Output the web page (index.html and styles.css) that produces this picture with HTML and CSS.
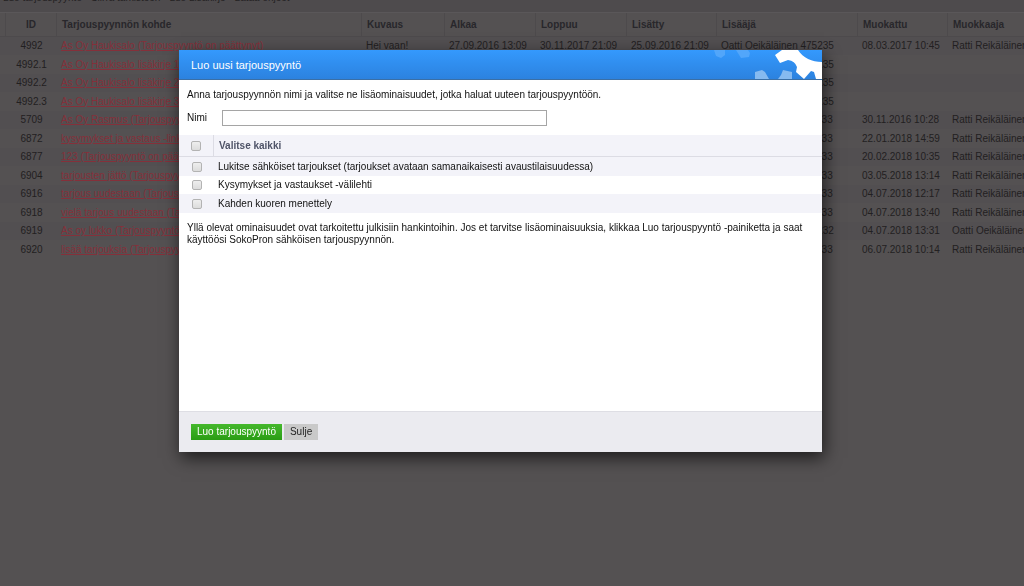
FILE: index.html
```html
<!DOCTYPE html>
<html lang="fi">
<head>
<meta charset="utf-8">
<meta name="viewport" content="width=device-width, initial-scale=1">
<title>Luo uusi tarjouspyyntö</title>
<link rel="stylesheet" href="styles.css">
</head>
<body>
<div class="page">
  <nav class="toolbar">
    <a href="#">Luo tarjouspyyntö</a><a href="#">Siirrä tarkisteen</a><a href="#">Luo Lisäkirje</a><a href="#">Lataa ohjeet</a>
  </nav>
  <table class="list">
    <colgroup><col class="c-edge"><col class="c-id"><col class="c-name"><col class="c-desc"><col class="c-date"><col class="c-date"><col class="c-added"><col class="c-person"><col class="c-mod"><col class="c-last"></colgroup>
    <thead>
      <tr><th></th><th class="id">ID</th><th>Tarjouspyynnön kohde</th><th>Kuvaus</th><th>Alkaa</th><th>Loppuu</th><th>Lisätty</th><th>Lisääjä</th><th>Muokattu</th><th>Muokkaaja</th></tr>
    </thead>
    <tbody>
      <tr><td></td><td class="id">4992</td><td><a href="#">As Oy Haukisalo (Tarjouspyyntö on päättynyt)</a></td><td>Hei vaan!</td><td>27.09.2016 13:09</td><td>30.11.2017 21:09</td><td>25.09.2016 21:09</td><td>Oatti Oeikäläinen 475235</td><td>08.03.2017 10:45</td><td>Ratti Reikäläinen</td></tr>
      <tr><td></td><td class="id">4992.1</td><td><a href="#">As Oy Haukisalo lisäkirje 1 (Tarjouspyyntö)</a></td><td></td><td></td><td></td><td></td><td>Oatti Oeikäläinen 475235</td><td></td><td></td></tr>
      <tr><td></td><td class="id">4992.2</td><td><a href="#">As Oy Haukisalo lisäkirje 2 (Tarjouspyyntö)</a></td><td></td><td></td><td></td><td></td><td>Oatti Oeikäläinen 475235</td><td></td><td></td></tr>
      <tr><td></td><td class="id">4992.3</td><td><a href="#">As Oy Haukisalo lisäkirje 3 (Tarjouspyyntö)</a></td><td></td><td></td><td></td><td></td><td>Oatti Oeikäläinen 475235</td><td></td><td></td></tr>
      <tr><td></td><td class="id">5709</td><td><a href="#">As Oy Rasmus (Tarjouspyyntö on päättynyt)</a></td><td></td><td></td><td></td><td></td><td>Ratti Reikäläinen 475233</td><td>30.11.2016 10:28</td><td>Ratti Reikäläinen</td></tr>
      <tr><td></td><td class="id">6872</td><td><a href="#">kysymykset ja vastaus -linkki (Tarjouspyyntö)</a></td><td></td><td></td><td></td><td></td><td>Ratti Reikäläinen 475233</td><td>22.01.2018 14:59</td><td>Ratti Reikäläinen</td></tr>
      <tr><td></td><td class="id">6877</td><td><a href="#">123 (Tarjouspyyntö on päättynyt)</a></td><td></td><td></td><td></td><td></td><td>Ratti Reikäläinen 475233</td><td>20.02.2018 10:35</td><td>Ratti Reikäläinen</td></tr>
      <tr><td></td><td class="id">6904</td><td><a href="#">tarjousten jättö (Tarjouspyyntö on päättynyt)</a></td><td></td><td></td><td></td><td></td><td>Ratti Reikäläinen 475233</td><td>03.05.2018 13:14</td><td>Ratti Reikäläinen</td></tr>
      <tr><td></td><td class="id">6916</td><td><a href="#">tarjous uudestaan (Tarjouspyyntö on päättynyt)</a></td><td></td><td></td><td></td><td></td><td>Ratti Reikäläinen 475233</td><td>04.07.2018 12:17</td><td>Ratti Reikäläinen</td></tr>
      <tr><td></td><td class="id">6918</td><td><a href="#">vielä tarjous uudestaan (Tarjouspyyntö)</a></td><td></td><td></td><td></td><td></td><td>Ratti Reikäläinen 475233</td><td>04.07.2018 13:40</td><td>Ratti Reikäläinen</td></tr>
      <tr><td></td><td class="id">6919</td><td><a href="#">As oy lukko (Tarjouspyyntö on päättynyt)</a></td><td></td><td></td><td></td><td></td><td>Oatti Oeikäläinen 475232</td><td>04.07.2018 13:31</td><td>Oatti Oeikäläinen</td></tr>
      <tr><td></td><td class="id">6920</td><td><a href="#">lisää tarjouksia (Tarjouspyyntö on päättynyt)</a></td><td></td><td></td><td></td><td></td><td>Ratti Reikäläinen 475233</td><td>06.07.2018 10:14</td><td>Ratti Reikäläinen</td></tr>
    </tbody>
  </table>
</div>
<div class="overlay">
  <form class="dialog" role="dialog" aria-labelledby="dialog-title">
    <header class="dialog-head">
      <h1 id="dialog-title">Luo uusi tarjouspyyntö</h1>
      <svg class="gears" viewBox="0 0 112 29" width="112" height="29" aria-hidden="true">
        <path fill="#52a6fa" d="M4 0H15V5L11 8 6 6zM26 0H38L40 3 39 7 31 8z"/>
        <path fill="#86baf0" d="M45 22L52 20 55 22 59 29H45zM73 20L82 22V29H68L71 25z"/>
        <path fill="#fff" d="M72 0L65 5 70 13 78 10Q85 11 87 17L86 22 94 29 101 21 104 22 106 29H112V12C102 12 93 8 88 0z"/>
      </svg>
    </header>
    <div class="dialog-body">
      <p>Anna tarjouspyynnön nimi ja valitse ne lisäominaisuudet, jotka haluat uuteen tarjouspyyntöön.</p>
      <div class="field"><label for="name">Nimi</label><input type="text" id="name"></div>
      <table class="options">
        <thead><tr><th class="tick"><input type="checkbox" id="all"></th><th><label for="all">Valitse kaikki</label></th></tr></thead>
        <tbody>
          <tr><td class="tick"><input type="checkbox" id="o1"></td><td><label for="o1">Lukitse sähköiset tarjoukset (tarjoukset avataan samanaikaisesti avaustilaisuudessa)</label></td></tr>
          <tr><td class="tick"><input type="checkbox" id="o2"></td><td><label for="o2">Kysymykset ja vastaukset -välilehti</label></td></tr>
          <tr><td class="tick"><input type="checkbox" id="o3"></td><td><label for="o3">Kahden kuoren menettely</label></td></tr>
        </tbody>
      </table>
      <p class="note">Yllä olevat ominaisuudet ovat tarkoitettu julkisiin hankintoihin. Jos et tarvitse lisäominaisuuksia, klikkaa Luo tarjouspyyntö -painiketta ja saat käyttöösi SokoPron sähköisen tarjouspyynnön.</p>
    </div>
    <footer class="dialog-foot">
      <button type="submit" class="primary">Luo tarjouspyyntö</button>
      <button type="button" class="plain">Sulje</button>
    </footer>
  </form>
</div>
</body>
</html>
```
FILE: styles.css
```css
* { box-sizing: border-box; }
body {
  margin: 0;
  overflow: hidden;
  background: #545152;
  color: #222021;
  font: 10px/12px "Liberation Sans", Arial, sans-serif;
}
.toolbar {
  display: flex;
  align-items: flex-end;
  gap: 9px;
  height: 13px;
  padding: 0 3px 8px;
  overflow: hidden;
  background: #4e4b4d;
  border-bottom: 1px solid #5a5759;
}
.toolbar a { color: #242223; text-decoration: none; }
.list {
  width: 1060px;
  table-layout: fixed;
  border-collapse: separate;
  border-spacing: 0;
}
.list th, .list td {
  height: 18px;
  padding: 0 4px;
  text-align: left;
  white-space: nowrap;
}
.list th {
  height: 24px;
  padding-left: 5px;
  color: #28272b;
  border-right: 1px solid #4d4a4c;
  border-bottom: 1px solid #4d4a4c;
}
.list tbody tr:nth-child(odd) td { background: #524f51; }
.list tbody tr:nth-child(even) td { height: 19px; }
.list .id { padding: 0; text-align: center; }
.list a { color: #85303a; }
.c-edge { width: 6px; }
.c-id { width: 51px; }
.c-name { width: 305px; }
.c-desc { width: 83px; }
.c-date { width: 91px; }
.c-added { width: 90px; }
.c-person { width: 141px; }
.c-mod { width: 90px; }
.overlay {
  position: fixed;
  inset: 0;
  display: flex;
  justify-content: center;
  align-items: flex-start;
  padding: 50px 23px 0 0;
}
.dialog {
  display: flex;
  flex-direction: column;
  flex: 0 1 643px;
  min-height: 402px;
  background: #fff;
  color: #111;
  box-shadow: 2px 6px 16px rgba(0, 0, 0, 0.65);
}
.dialog-head {
  display: flex;
  justify-content: space-between;
  align-items: center;
  height: 30px;
  padding-left: 12px;
  color: #fff;
  background: linear-gradient(#3499fd, #2c82df);
  border-bottom: 1px solid #3b6fa5;
}
.dialog-head h1 { margin: 0; font-size: 11px; font-weight: normal; }
.dialog-body { flex: 1; padding-top: 9px; }
.dialog-body p { margin: 0; padding: 0 12px 0 8px; }
.field {
  display: flex;
  align-items: center;
  gap: 15px;
  padding: 9px 8px;
}
.field input {
  width: 325px;
  height: 16px;
  padding: 0 2px;
  border: 1px solid #a5a5a5;
  font: inherit;
}
.options { width: 100%; border-collapse: separate; border-spacing: 0; }
.options th, .options td { height: 18px; padding: 0 4px; text-align: left; }
.options th {
  height: 22px;
  padding-left: 5px;
  color: #4f5468;
  background: #f3f3f9;
  border-bottom: 1px solid #dcdce4;
}
.options td { height: 19px; }
.options tbody tr:nth-child(even) td { height: 18px; }
.options tbody tr:nth-child(odd) { background: #f3f3f9; }
.options .tick { width: 35px; padding: 0; text-align: center; }
.options th.tick { border-right: 1px solid #dcdce4; }
.options input {
  appearance: none;
  display: block;
  width: 10px;
  height: 10px;
  margin: 0 auto;
  border: 1px solid #b3b3b3;
  border-radius: 2px;
  background: linear-gradient(#eee, #dcdcdc);
}
.dialog-body .note { padding-top: 9px; }
.dialog-foot {
  display: flex;
  gap: 2px;
  height: 41px;
  padding: 12px;
  background: #ebebf0;
  border-top: 1px solid #dedee4;
}
.dialog-foot button {
  height: 16px;
  padding: 0 6px;
  border: 0;
  font: inherit;
}
.dialog-foot .primary { color: #fff; background: linear-gradient(#45b82c, #2a9d14); }
.dialog-foot .plain { color: #222; background: #c9c9c9; }
```
